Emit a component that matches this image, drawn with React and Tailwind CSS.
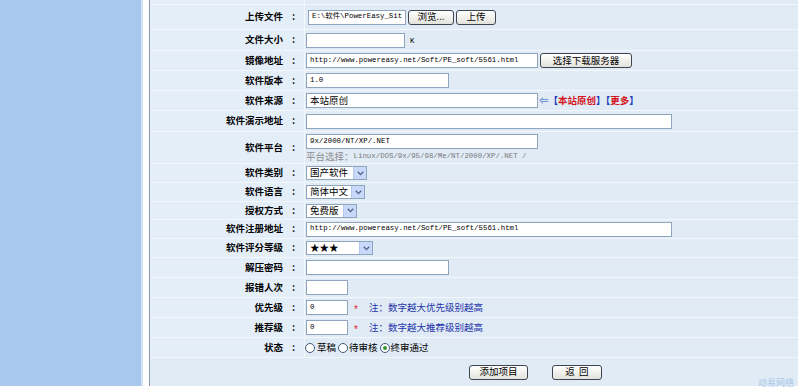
import React from 'react';

const cjk = "font-['Noto_Sans_CJK_SC','Liberation_Sans',sans-serif]";
const mono = "font-['Liberation_Mono','Noto_Sans_CJK_SC',monospace]";

function Row({ h, label, children }) {
  return (
    <div className={`flex gap-px ${h}`}>
      <div className="w-[154px] shrink-0 bg-[#e4eef8] flex items-center justify-end pr-[9px]">
        {label && (
          <span className={`${cjk} text-[9.5px] font-bold text-black leading-none`}>
            {label}
            <span className="ml-[9px]">:</span>
          </span>
        )}
      </div>
      <div className="flex-1 bg-[#e0ebf6] flex items-center pl-[1px]">{children}</div>
    </div>
  );
}

function Field({ w, value, zh }) {
  return (
    <div
      className={`${w} h-[15px] border border-[#8fa4bd] bg-white flex items-center px-[3px] overflow-hidden whitespace-nowrap leading-none text-black ${
        zh ? `${cjk} text-[9.5px]` : `${mono} text-[7.4px]`
      }`}
    >
      {value}
    </div>
  );
}

function Select({ w, value }) {
  return (
    <div className={`${w} h-[14px] border border-[#8fa4bd] bg-white flex items-center leading-none`}>
      <span className={`flex-1 pl-[3px] ${cjk} text-[9.5px] text-black`}>{value}</span>
      <span className="w-[13px] h-full bg-[#c7d8f8] border-l border-[#b3c7ea] flex items-center justify-center">
        <svg width="7" height="5" viewBox="0 0 7 5">
          <path d="M0.8 0.8 L3.5 3.6 L6.2 0.8" fill="none" stroke="#4d6185" strokeWidth="1.3" />
        </svg>
      </span>
    </div>
  );
}

function Btn({ w, children }) {
  return (
    <div
      className={`${w} h-[15px] rounded-[3px] border border-[#3d4650] bg-gradient-to-b from-white to-[#e3e3dc] flex items-center justify-center ${cjk} text-[9.5px] text-black leading-none`}
    >
      {children}
    </div>
  );
}

function Radio({ checked }) {
  return (
    <span className="w-[10px] h-[10px] rounded-full border border-[#3f5a78] bg-white flex items-center justify-center">
      {checked && <span className="w-[4px] h-[4px] rounded-full bg-[#2f9a2f]" />}
    </span>
  );
}

export default function App() {
  return (
    <div className="w-[798px] h-[389px] bg-white overflow-hidden relative">
      <div className="flex h-[386px]">
        <div className="w-[141px] bg-[#a8c8ee]" />
        <div className="w-[2px] bg-[#d2e2f7]" />
        <div className="w-[6px] bg-white" />
        <div className="w-px bg-[#8b98a6]" />
        <div className="flex-1 bg-[#f3f8fc] flex flex-col gap-px">
          <Row h="h-[4px]" />
          <Row h="h-[24px]" label="上传文件">
            <div className="flex items-center gap-[2px] ml-[2px]">
              <Field w="w-[98px]" value="E:\软件\PowerEasy_Sit" />
              <Btn w="w-[46px]">浏览...</Btn>
              <Btn w="w-[40px]">上传</Btn>
            </div>
          </Row>
          <Row h="h-[20px]" label="文件大小">
            <Field w="w-[99px]" value="" />
            <span className={`${mono} text-[7.4px] ml-[5px] mt-[4px]`}>K</span>
          </Row>
          <Row h="h-[19px]" label="镜像地址">
            <Field w="w-[232px]" value="http://www.powereasy.net/Soft/PE_soft/5561.html" />
            <div className="ml-[2px]">
              <Btn w="w-[92px]">选择下载服务器</Btn>
            </div>
          </Row>
          <Row h="h-[19px]" label="软件版本">
            <Field w="w-[143px]" value="1.0" />
          </Row>
          <Row h="h-[19px]" label="软件来源">
            <Field w="w-[232px]" value="本站原创" zh />
            <span className={`${cjk} text-[9.5px] font-bold leading-none ml-[1px] whitespace-nowrap`}>
              <span className="text-[#5b7fd6] font-normal">⇐</span>
              <span className="text-[#1d3bb8]">【</span>
              <span className="text-[#d4141c]">本站原创</span>
              <span className="text-[#1d3bb8]">】【</span>
              <span className="text-[#d4141c]">更多</span>
              <span className="text-[#1d3bb8]">】</span>
            </span>
          </Row>
          <Row h="h-[20px]" label="软件演示地址">
            <Field w="w-[366px]" value="" />
          </Row>
          <Row h="h-[31px]" label="软件平台">
            <div className="self-start mt-[2px] flex flex-col gap-[2px]">
              <Field w="w-[232px]" value="9x/2000/NT/XP/.NET" />
              <div className="h-[11px] flex items-center text-[#7a7a7a] leading-none whitespace-nowrap">
                <span className={`${cjk} text-[9.5px] text-[#8c8c8c]`}>平台选择：</span>
                <span className={`${mono} text-[7.4px]`}>Linux/DOS/9x/95/98/Me/NT/2000/XP/.NET /</span>
              </div>
            </div>
          </Row>
          <Row h="h-[18px]" label="软件类别">
            <Select w="w-[61px]" value="国产软件" />
          </Row>
          <Row h="h-[18px]" label="软件语言">
            <Select w="w-[59px]" value="简体中文" />
          </Row>
          <Row h="h-[17px]" label="授权方式">
            <Select w="w-[51px]" value="免费版" />
          </Row>
          <Row h="h-[18px]" label="软件注册地址">
            <Field w="w-[366px]" value="http://www.powereasy.net/Soft/PE_soft/5561.html" />
          </Row>
          <Row h="h-[18px]" label="软件评分等级">
            <Select w="w-[67px]" value="★★★" />
          </Row>
          <Row h="h-[19px]" label="解压密码">
            <Field w="w-[143px]" value="" />
          </Row>
          <Row h="h-[19px]" label="报错人次">
            <Field w="w-[42px]" value="" />
          </Row>
          <Row h="h-[19px]" label="优先级">
            <Field w="w-[42px]" value="0" />
            <span className="text-[#e0202a] text-[10px] ml-[6px] mt-[3px] font-['Liberation_Sans']">*</span>
            <span className={`${cjk} text-[9.5px] text-[#2634a8] ml-[11px] leading-none`}>注：数字越大优先级别越高</span>
          </Row>
          <Row h="h-[19px]" label="推荐级">
            <Field w="w-[42px]" value="0" />
            <span className="text-[#e0202a] text-[10px] ml-[6px] mt-[3px] font-['Liberation_Sans']">*</span>
            <span className={`${cjk} text-[9.5px] text-[#2634a8] ml-[11px] leading-none`}>注：数字越大推荐级别越高</span>
          </Row>
          <Row h="h-[19px]" label="状态">
            <div className={`flex items-center ${cjk} text-[9.5px] text-black leading-none ml-[-1px]`}>
              <Radio />
              <span className="ml-[2px] mr-[2px]">草稿</span>
              <Radio />
              <span className="ml-[1px] mr-[2px]">待审核</span>
              <Radio checked />
              <span className="ml-[1px]">终审通过</span>
            </div>
          </Row>
          <div className="h-[28px] bg-[#e0ebf6] flex items-center pl-[319px] gap-[24px]">
            <Btn w="w-[59px]">添加项目</Btn>
            <Btn w="w-[50px]">返&nbsp;&nbsp;回</Btn>
          </div>
        </div>
      </div>
      <span className={`absolute right-[4px] bottom-[1px] ${cjk} text-[9px] text-[#a9c9e9] leading-[10px]`}>动易网络</span>
    </div>
  );
}
